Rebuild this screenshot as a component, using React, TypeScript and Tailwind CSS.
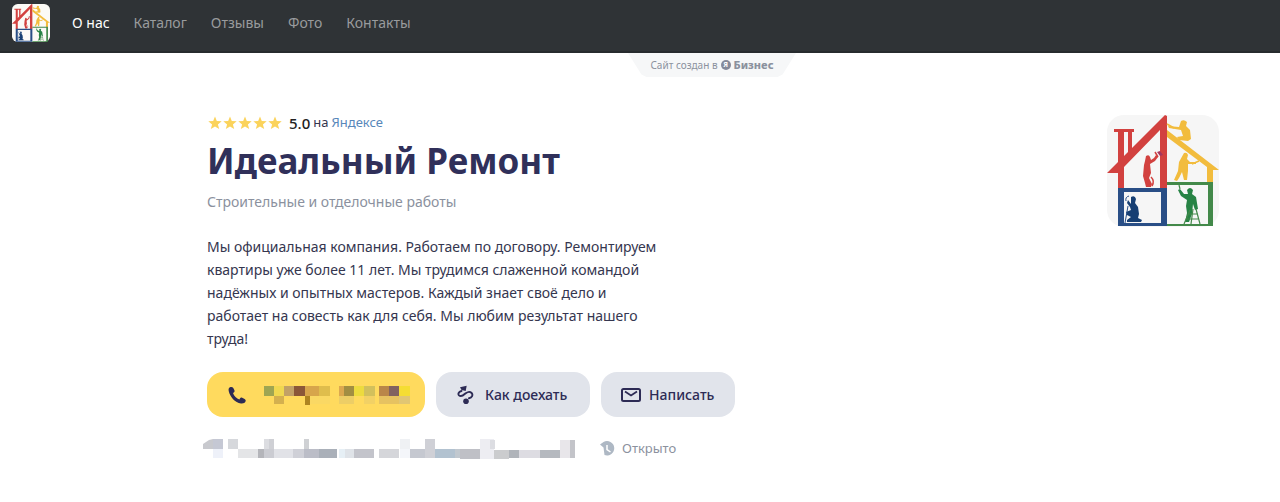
const links = ['О нас', 'Каталог', 'Отзывы', 'Фото', 'Контакты']

// x, y, width, height, colour
type Cell = [number, number, number, number, string]

const phoneCells: Cell[] = [
  [0, 1, 10, 10, '#9fa552'],
  [10, 1, 10, 10, '#f0d850'],
  [20, 1, 10, 10, '#c2a166'],
  [30, 1, 11, 10, '#8b5738'],
  [41, 1, 14, 10, '#d7a54b'],
  [55, 1, 11, 10, '#dfbd4c'],
  [75, 1, 5, 10, '#dca84f'],
  [80, 1, 10, 10, '#a28e42'],
  [90, 1, 10, 10, '#eddb3e'],
  [100, 1, 11, 10, '#d2c05c'],
  [115, 1, 10, 10, '#b98649'],
  [125, 1, 10, 10, '#816260'],
  [135, 1, 11, 10, '#f5dd33'],
  [10, 11, 10, 8, '#d4b04f'],
  [41, 11, 5, 9, '#ae8421'],
  [46, 11, 20, 8, '#fad864'],
  [75, 11, 15, 8, '#edce66'],
  [100, 11, 11, 8, '#f2d165'],
  [115, 11, 20, 8, '#e6c261'],
  [135, 11, 11, 8, '#e1c673'],
]

const addressCells: Cell[] = [
  [10, 0, 10, 10, '#c5c8d4'],
  [10, 10, 10, 9, '#eef1f9'],
  [25, 0, 10, 10, '#d6d8dc'],
  [35, 10, 20, 9, '#e4e5e7'],
  [55, 10, 6, 9, '#b4b5ba'],
  [61, 0, 5, 10, '#dcdde1'],
  [66, 0, 5, 10, '#cfd0d5'],
  [61, 10, 10, 9, '#cbccd2'],
  [71, 10, 19, 9, '#e1e2e7'],
  [90, 10, 11, 9, '#cfd0d7'],
  [101, 0, 5, 10, '#cfd1d4'],
  [101, 10, 15, 9, '#bbbdc7'],
  [116, 10, 18, 9, '#aab0b9'],
  [136, 10, 6, 9, '#e6eff5'],
  [142, 10, 9, 9, '#dfe3e8'],
  [151, 10, 20, 9, '#c3c4cb'],
  [176, 10, 20, 9, '#d5d6da'],
  [197, 0, 10, 10, '#eff1f4'],
  [197, 10, 10, 9, '#f4f6fa'],
  [207, 10, 15, 9, '#c5c8d0'],
  [222, 0, 10, 19, '#cfd0d6'],
  [232, 10, 20, 9, '#b2c2d0'],
  [252, 10, 5, 9, '#c1c8cf'],
  [257, 10, 20, 10, '#bfc0c6'],
  [277, 0, 14, 20, '#ededf2'],
  [287, 1, 5, 9, '#dcdde2'],
  [291, 11, 15, 9, '#cbccce'],
  [306, 11, 10, 8, '#b0b4ba'],
  [316, 11, 21, 8, '#dddce2'],
  [337, 11, 20, 8, '#b5b9bf'],
  [357, 1, 10, 18, '#e8e6ea'],
  [367, 1, 5, 18, '#c3c4c9'],
]

function Mosaic({ cells }: { cells: Cell[] }) {
  return (
    <>
      {cells.map(([x, y, width, height, fill]) => (
        <rect key={`${x}-${y}`} x={x} y={y} width={width} height={height} fill={fill} />
      ))}
    </>
  )
}

function HouseLogo({ className, background }: { className: string; background: string }) {
  return (
    <svg viewBox="0 0 112 112" className={className} role="img" aria-label="Идеальный Ремонт">
      <rect width="112" height="112" rx="17" fill={background} />
      <g fill="#d2413f">
        <path d="M58 0 60 1V74H53V15L17 52V74H11V58H0L11 47V17H7V14H27V17H25V33ZM17 17V41L21 37V17Z" fillRule="evenodd" />
        <path d="M39 41q3-2 4 1l1 3 3-2 2-3 2 2-3 4-5 3 1 9-2 5 3 6-1 3h-5l-1-4-2-7 1-11 1-4z" />
      </g>
      <path d="M48 37l3 5M44 62q4 4 1 9" stroke="#d2413f" strokeWidth="1.5" fill="none" />
      <path d="M50 37l3 4 3-1-3-4z" fill="#a5365f" />
      <g fill="#f2bc3d">
        <path d="M60 15 112 55H106V68H100V52L60 22Z" />
        <path d="M74 6q3-2 6 1l-1 4 4 4 1 9-3 2-9-1-2-3 6-1-2-6-6-1-6-1-1-2 11 1z" />
        <path d="M77 38q3-1 4 2l-1 4 3 3 6 0 0 2-8 0 0 7-1 9h-3l-2-8-3 6-2 3-3-1 4-9 1-9z" />
      </g>
      <path d="M60 9l7 4M85 49l7-3" stroke="#f2bc3d" strokeWidth="1.5" />
      <path d="M11 73H60V111H11ZM17 77V108H54V77Z" fill="#294e86" fillRule="evenodd" />
      <path d="M24 82q4-2 5 2l-1 4 3 4 1 7-1 4 4 2-1 2H20v-2l4-3-4-2-1-3 5-2-1-3-3-4 1-3 3 4z" fill="#173f73" />
      <path d="M19 86q-1-4 3-5M18 108l3-17" stroke="#294e86" strokeWidth="1" fill="none" />
      <path d="M60 67H106V111H60ZM60 70V109H101V70Z" fill="#43894a" fillRule="evenodd" />
      <path d="M80 75q3-4 6 0l-1 4 4 3 2 12-3 1-2-6-1 10-3 8h-4l2-9-1-7 1-6-6-4-3-6 2-1 4 5 4 0z" fill="#278345" />
      <path d="M77 109l6-14M84 109l2-15M89 94l4 15M79 104h12M81 99h10M73 74l-1-4" stroke="#43894a" strokeWidth="1.2" fill="none" />
    </svg>
  )
}

function StarIcon() {
  return (
    <svg viewBox="0 0 14 14" className="size-[14px]" aria-hidden="true">
      <path d="M7 .5 8.800 5 13.700 5.300 9.900 8.400 11.200 13 7 10.400 2.800 13 4.100 8.400.3 5.300 5.200 5Z" fill="#fbd35b" />
    </svg>
  )
}

function PhoneIcon() {
  return (
    <svg viewBox="0 0 18 18" className="size-[18px] shrink-0" aria-hidden="true">
      <path d="M2.500 1C1 1.200.3 3 .7 5 2 11 7 16.500 13 17.500c2.200.3 4-.6 4.600-2.200.4-1-.2-1.800-1-2.300l-2.400-1.200c-1-.5-1.800 0-2.400 1l-.4.700C8.600 12.500 6 10 5 7l.8-.6c.8-.6 1-1.300.6-2.200L5.300 2C4.700 1 3.700.7 2.500 1Z" fill="#2d2b55" />
    </svg>
  )
}

function RouteIcon() {
  return (
    <svg viewBox="0 0 18 20" className="h-5 w-[18px] shrink-0" aria-hidden="true">
      <path d="M3 2.200 9.700.8 8.700 6 4.500 5Z" fill="#2d2b55" />
      <path d="M4.500 6C1.500 6.800.8 9 2 10.300c1.800 1.800 4.200.2 6-1.500s4.800-2.600 6.600-.8c1.600 1.800.6 4.600-2.600 5.200" fill="none" stroke="#2d2b55" strokeWidth="1.900" strokeLinecap="round" />
      <circle cx="9" cy="16.200" r="2.800" fill="#2d2b55" />
    </svg>
  )
}

function MailIcon() {
  return (
    <svg viewBox="0 0 20 14" className="h-[14px] w-5 shrink-0" aria-hidden="true">
      <rect x="1" y="1" width="18" height="12" rx="1.500" fill="none" stroke="#2d2b55" strokeWidth="2" />
      <path d="M4 3.500 10 7.500 16 3.500" fill="none" stroke="#2d2b55" strokeWidth="1.800" />
    </svg>
  )
}

function ClockIcon() {
  return (
    <svg viewBox="0 0 15 16" className="h-4 w-[15px]" aria-hidden="true">
      <path d="M0 3.500 3.500 1A7.200 7.200 0 1 1 4.500 14L3.500 6.500Z" fill="#aeb8c4" />
      <path d="M7 4v4.500L10.500 11" fill="none" stroke="#fff" strokeWidth="1.500" />
    </svg>
  )
}

export default function App() {
  return (
    <div className="min-h-screen bg-white font-['Noto_Sans',sans-serif] text-[#35364f]">
      <header className="flex h-[53px] items-start border-b-2 border-[#272b2e] bg-[#2f3336] px-3 pt-1">
        <a href="#top">
          <HouseLogo className="size-[38px]" background="#fbfaf6" />
        </a>
        <nav className="ml-[22px] flex gap-6 pt-2 text-sm leading-[22px]">
          {links.map((link, i) => (
            <a key={link} href="#top" className={i === 0 ? 'text-white' : 'text-[#999b9d]'}>
              {link}
            </a>
          ))}
        </nav>
      </header>

      <div className="flex justify-center pl-36">
        <a
          href="#business"
          className="flex h-6 w-[168px] items-center justify-center gap-[3px] bg-[#f6f7f8] text-[10px] text-[#8b919e] [clip-path:polygon(0_0,100%_0,92%_90%,89%_100%,11%_100%,8%_90%)]"
        >
          Сайт создан в
          <span className="flex size-[10px] items-center justify-center rounded-full bg-[#858a9b] text-[7px] font-bold text-white">Я</span>
          <b className="text-[11px] font-extrabold">Бизнес</b>
        </a>
      </div>

      <main className="flex items-start justify-between pt-[37px] pr-[61px] pb-10 pl-[207px]">
        <section>
          <div className="flex h-[18px] items-center text-[13px]">
            <div className="mr-[7px] flex gap-px pl-px">
              {[1, 2, 3, 4, 5].map((n) => (
                <StarIcon key={n} />
              ))}
            </div>
            <span className="mr-[3px] text-[15px] font-medium text-[#222]">5.0</span>
            <span className="mr-[3px]">на</span>
            <a href="#reviews" className="text-[#5887ba]">Яндексе</a>
          </div>
          <h1 className="mt-[5px] text-[35px] leading-[48px] font-bold text-[#30305a]">Идеальный Ремонт</h1>
          <p className="mt-[6px] text-sm leading-[22px] text-[#8b919e]">Строительные и отделочные работы</p>
          <p className="mt-[22px] max-w-[460px] text-sm leading-[23px]">
            Мы официальная компания. Работаем по договору. Ремонтируем квартиры уже более 11 лет. Мы трудимся слаженной
            командой надёжных и опытных мастеров. Каждый знает своё дело и работает на совесть как для себя. Мы любим
            результат нашего труда!
          </p>

          <div className="mt-[22px] flex gap-[11px] text-sm font-medium text-[#2d2b55]">
            <button aria-label="Позвонить" className="flex h-[45px] w-[218px] items-center gap-[18px] rounded-2xl bg-[#ffda5e] pl-[21px]">
              <PhoneIcon />
              <svg viewBox="0 0 146 20" className="h-5 w-[146px]" aria-hidden="true">
                <Mosaic cells={phoneCells} />
              </svg>
            </button>
            <button className="flex h-[45px] w-[154px] items-center gap-[10px] rounded-2xl bg-[#e1e4eb] pl-[21px] whitespace-nowrap">
              <RouteIcon />
              Как доехать
            </button>
            <button className="flex h-[45px] w-[134px] items-center gap-2 rounded-2xl bg-[#e1e4eb] pl-5 whitespace-nowrap">
              <MailIcon />
              Написать
            </button>
          </div>

          <div className="mt-[22px] -ml-1 flex h-5 items-center">
            <svg viewBox="0 0 372 20" className="h-5 w-[372px]" role="img" aria-label="Адрес">
              <path d="M0 10V5L6 1 10 0V10Z" fill="#c8c9ce" />
              <Mosaic cells={addressCells} />
            </svg>
            <div className="ml-[25px] flex items-center gap-[7px] text-[13px] text-[#8b919e]">
              <ClockIcon />
              Открыто
            </div>
          </div>
        </section>
        <HouseLogo className="mt-px size-28 shrink-0" background="#f6f6f6" />
      </main>
    </div>
  )
}
